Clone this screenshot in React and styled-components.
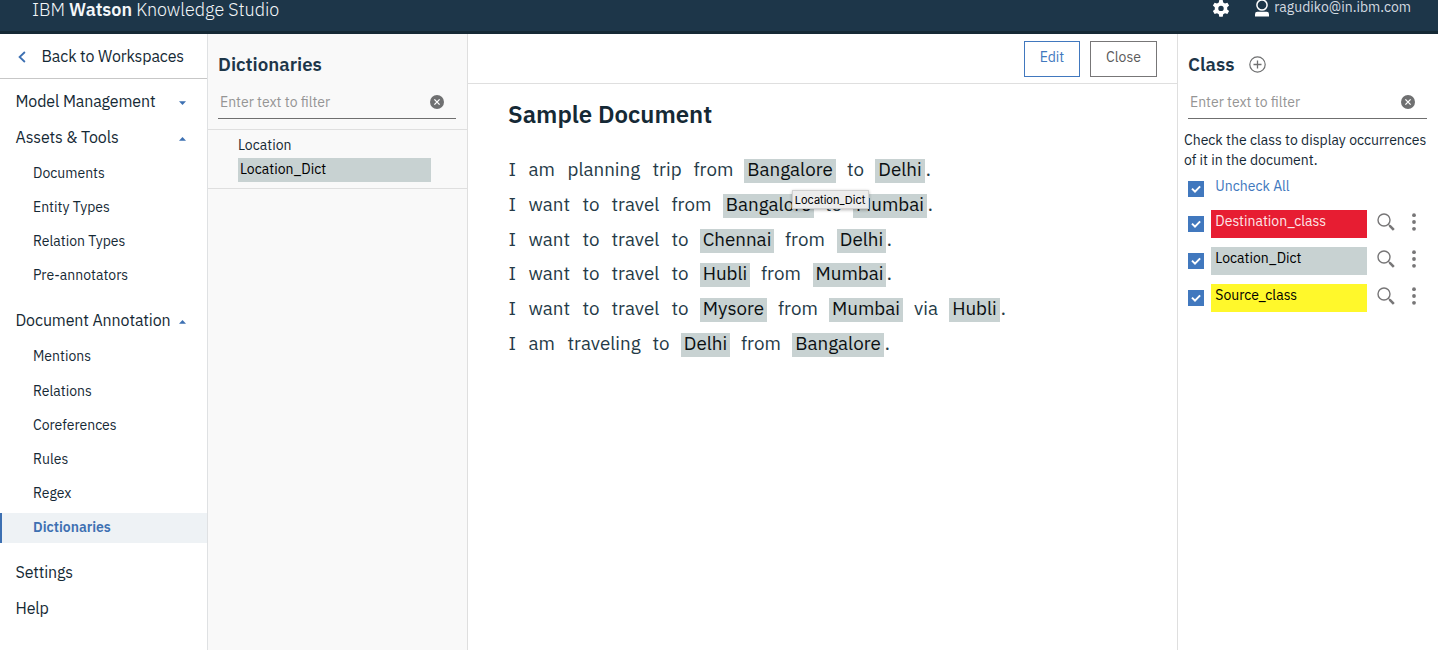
import React from "react";
import styled, { createGlobalStyle, css } from "styled-components";

const GlobalStyle = createGlobalStyle`
  * { box-sizing: border-box; }
  body {
    margin: 0;
    overflow: hidden;
    background: #fff;
    color: #152935;
    font-family: "IBM Plex Sans", Roboto, "Liberation Sans", sans-serif;
    font-size: 14px;
  }
`;

const Page = styled.div`
  display: flex;
  flex-direction: column;
  height: 650px;
`;

const TopBar = styled.header`
  flex: none;
  display: flex;
  align-items: flex-start;
  height: 34px;
  padding: 0 27px 0 32px;
  background: #1d3649;
  border-bottom: 3px solid #152935;
  color: #f4f7f9;
`;

const Brand = styled.div`
  flex: 1;
  font-size: 18px;
  font-weight: 300;
  line-height: 20px;
  letter-spacing: -0.04px;
  strong { font-weight: 600; }
`;

const TopIcon = styled.svg`
  flex: none;
  display: block;
  margin-right: ${(p) => p.$gap}px;
`;

const Email = styled.span`
  font-size: 14px;
  line-height: 15px;
  color: #d3dae0;
`;

const Columns = styled.div`
  flex: 1;
  display: flex;
  min-height: 0;
`;

const Nav = styled.nav`
  flex: none;
  width: 208px;
  border-right: 1px solid #dfe1e3;
`;

const BackLink = styled.div`
  display: flex;
  align-items: center;
  height: 45px;
  padding: 0.4px 0 0 18px;
  margin-bottom: 4px;
  border-bottom: 1px solid #c7c7c7;
  font-size: 16px;
  letter-spacing: -0.13px;
  svg { margin: 2px 15.5px 0 0; }
`;

const NavGroup = styled.div`
  display: flex;
  align-items: center;
  justify-content: space-between;
  height: 36px;
  padding: 0 21.5px 1px 15.5px;
  font-size: 16px;
  letter-spacing: -0.12px;
`;

const Caret = styled.svg`
  display: block;
  width: 7px;
  height: 4px;
  margin-top: 4px;
  fill: #3d70b2;
  transform: ${(p) => (p.$open ? "none" : "scaleY(-1)")};
`;

const NavItems = styled.div`
  display: flex;
  flex-direction: column;
  gap: 4.25px;
  padding: 2.6px 0 ${(p) => p.$after}px;
`;

const NavItem = styled.div`
  height: 30px;
  line-height: 30px;
  padding-left: ${(p) => (p.$active ? 31 : 33)}px;
  font-size: 14px;
  ${(p) =>
    p.$active &&
    css`
      background: #eef2f5;
      border-left: 2px solid #3d70b2;
      color: #3d70b2;
      font-weight: 600;
      line-height: 29px;
    `}
`;

const DictPanel = styled.aside`
  flex: none;
  width: 260px;
  background: #f9f9f9;
  border-right: 1px solid #dfdfdf;
`;

const PanelTitle = styled.h2`
  display: flex;
  align-items: center;
  gap: 15px;
  height: 24px;
  margin: 18px 0 0 10px;
  color: #1d3649;
  font-size: 18.7px;
  font-weight: 600;
`;

const Filter = styled.div`
  display: flex;
  align-items: center;
  justify-content: space-between;
  height: 34px;
  margin: 9px 11px 0 10px;
  padding: 0 12px 0 2px;
  border-bottom: 1px solid #6f6f6f;
  color: #959595;
`;

const DictList = styled.div`
  margin-top: 10px;
  height: 60px;
  padding: 4px 36px 0 30px;
  border-top: 1px solid #dfdfdf;
  border-bottom: 1px solid #dfdfdf;
`;

const DictItem = styled.div`
  height: 24px;
  line-height: 22px;
  ${(p) =>
    p.$selected &&
    css`
      padding-left: 2px;
      background: #c8d2d2;
      color: #000;
      line-height: 23px;
    `}
`;

const Main = styled.main`
  flex: 1;
  min-width: 0;
`;

const Toolbar = styled.div`
  display: flex;
  justify-content: flex-end;
  gap: 10px;
  height: 50px;
  padding: 7px 20px 0 0;
  border-bottom: 1px solid #dfdfdf;
`;

const Button = styled.button`
  height: 36px;
  width: ${(p) => p.$width}px;
  padding: 0 0 4px;
  background: #fff;
  border: 1px solid ${(p) => (p.$primary ? "#4178be" : "#777677")};
  color: ${(p) => (p.$primary ? "#4178be" : "#5a5a5a")};
  font-family: inherit;
  font-size: 14px;
`;

const Document = styled.article`
  padding: 15px 0 0 40px;
`;

const DocTitle = styled.h1`
  margin: 0 0 30px;
  font-size: 24px;
  line-height: 30px;
  font-weight: 600;
`;

const Sentence = styled.div`
  display: flex;
  height: 34.8px;
  padding-left: 0.5px;
  line-height: 21px;
  font-size: 18.8px;
  color: #253a47;
`;

const Word = styled.span`
  flex: none;
  width: ${(p) => p.$width}px;
  white-space: nowrap;
`;

const Period = styled.span`
  padding-left: 0.7px;
`;

const Mention = styled.mark`
  position: relative;
  flex: none;
  width: ${(p) => p.$width}px;
  height: 24px;
  line-height: 21px;
  text-align: center;
  white-space: nowrap;
  background: #c8d2d2;
  color: #0b0f11;
`;

const Tooltip = styled.span`
  position: absolute;
  z-index: 2;
  left: 47.5px;
  top: 31px;
  width: 77px;
  height: 19px;
  line-height: 18px;
  background: #ececec;
  border: 1px solid #d0d0d0;
  box-shadow: 0 1px 3px rgba(0, 0, 0, 0.3);
  color: #000;
  font-family: Inter, sans-serif;
  font-size: 11px;
`;

const ClassPanel = styled.aside`
  flex: none;
  width: 261px;
  border-left: 1px solid #dfdfdf;
`;

const Hint = styled.p`
  margin: 11px 0 0 6px;
  line-height: 20px;
  white-space: nowrap;
`;

const ClassRow = styled.div`
  display: flex;
  align-items: flex-start;
  height: 37px;
  padding-left: 10px;
`;

const CheckAllRow = styled(ClassRow)`
  height: 40px;
  color: #4178be;
  > span { margin-left: 11.3px; line-height: 32px; }
`;

const CheckBox = styled.svg`
  flex: none;
  display: block;
  width: 16px;
  height: 16px;
  margin-top: ${(p) => p.$top}px;
  background: #4178be;
`;

const ClassTag = styled.div`
  width: 156px;
  height: 28px;
  margin-left: 7px;
  padding-left: 4.3px;
  line-height: 23px;
  background: ${(p) => p.$bg};
  color: ${(p) => p.$fg};
`;

const RowIcon = styled.svg`
  flex: none;
  display: block;
  margin: 3px 0 0 ${(p) => p.$left}px;
`;

const Clear = () => (
  <svg width="14" height="14" viewBox="0 0 14 14">
    <circle cx="7" cy="7" r="7" fill="#6f7071" />
    <path d="M4.4 4.4l5.2 5.2M9.6 4.4L4.4 9.6" stroke="#fff" strokeWidth="1.3" />
  </svg>
);

const Check = ({ top }) => (
  <CheckBox $top={top} viewBox="0 0 16 16">
    <path d="M4 7.6L7 10.6L12.1 5.4" fill="none" stroke="#fff" strokeWidth="2" />
  </CheckBox>
);

const Gear = () => (
  <TopIcon $gap={25} width="18" height="18" viewBox="0 0 18 18">
    <path
      fill="#fff"
      fillRule="evenodd"
      d="M7.3 0h3.4l.5 2.5 1.8 1 2.4-.8 1.7 2.9-1.9 1.7v2.1l1.9 1.7-1.7 2.9-2.4-.8-1.8 1-.5 2.5H7.3l-.5-2.5-1.8-1-2.4.8-1.7-2.9 1.9-1.7V7.3L.9 5.6l1.7-2.9 2.4.8 1.8-1zM9 5.7a2.7 2.7 0 100 5.4 2.7 2.7 0 000-5.4z"
    />
  </TopIcon>
);

const User = () => (
  <TopIcon $gap={5} width="14" height="17" viewBox="0 0 14 17">
    <circle cx="7" cy="5" r="5.1" fill="none" stroke="#fff" strokeWidth="1.5" />
    <path d="M0 16.5v-2.3q0-2.4 2.4-2.4h9.2q2.4 0 2.4 2.4v2.3z" fill="#fff" />
  </TopIcon>
);

const groups = [
  { label: "Model Management" },
  {
    label: "Assets & Tools",
    after: 12.4,
    items: ["Documents", "Entity Types", "Relation Types", "Pre-annotators"],
  },
  {
    label: "Document Annotation",
    after: 11.9,
    items: ["Mentions", "Relations", "Coreferences", "Rules", "Regex", "Dictionaries"],
  },
];

// Each token is [text, width, mention?, tooltip?].
const sentences = [
  [["I", 20], ["am", 39], ["planning", 85], ["trip", 41], ["from", 50.5], ["Bangalore", 92, true, "Location_Dict"], ["", 11], ["to", 28], ["Delhi", 50, true]],
  [["I", 20], ["want", 54], ["to", 29], ["travel", 60], ["from", 51.5], ["Bangalore", 91, true], ["", 11], ["to", 28], ["Mumbai", 74, true]],
  [["I", 20], ["want", 54], ["to", 29], ["travel", 60], ["to", 28.5], ["Chennai", 74, true], ["", 11], ["from", 52], ["Delhi", 49, true]],
  [["I", 20], ["want", 54], ["to", 29], ["travel", 60], ["to", 28.5], ["Hubli", 50, true], ["", 11], ["from", 52], ["Mumbai", 73, true]],
  [["I", 20], ["want", 54], ["to", 29], ["travel", 60], ["to", 28.5], ["Mysore", 67, true], ["", 11], ["from", 51], ["Mumbai", 74, true], ["", 11], ["via", 35], ["Hubli", 51, true]],
  [["I", 20], ["am", 39], ["traveling", 85], ["to", 28.5], ["Delhi", 49, true], ["", 11], ["from", 51], ["Bangalore", 92, true]],
];

const classes = [
  { name: "Destination_class", bg: "#e71d32", fg: "#fde6e8" },
  { name: "Location_Dict", bg: "#c8d2d2", fg: "#000" },
  { name: "Source_class", bg: "#fff82b", fg: "#000" },
];

export default function App() {
  return (
    <Page>
      <GlobalStyle />
      <TopBar>
        <Brand>IBM <strong>Watson</strong> Knowledge Studio</Brand>
        <Gear />
        <User />
        <Email>ragudiko@in.ibm.com</Email>
      </TopBar>
      <Columns>
        <Nav>
          <BackLink>
            <svg width="8" height="12" viewBox="0 0 8 12">
              <path d="M6.9 1L1.6 6l5.3 5" fill="none" stroke="#3d70b2" strokeWidth="1.8" />
            </svg>
            Back to Workspaces
          </BackLink>
          {groups.map((g) => (
            <React.Fragment key={g.label}>
              <NavGroup>
                {g.label}
                <Caret $open={!!g.items} viewBox="0 0 7 4">
                  <path d="M3.5 0L7 3.8H0z" />
                </Caret>
              </NavGroup>
              {g.items && (
                <NavItems $after={g.after}>
                  {g.items.map((item) => (
                    <NavItem key={item} $active={item === "Dictionaries"}>{item}</NavItem>
                  ))}
                </NavItems>
              )}
            </React.Fragment>
          ))}
          <NavGroup>Settings</NavGroup>
          <NavGroup>Help</NavGroup>
        </Nav>
        <DictPanel>
          <PanelTitle>Dictionaries</PanelTitle>
          <Filter>Enter text to filter<Clear /></Filter>
          <DictList>
            <DictItem>Location</DictItem>
            <DictItem $selected>Location_Dict</DictItem>
          </DictList>
        </DictPanel>
        <Main>
          <Toolbar>
            <Button $primary $width={56}>Edit</Button>
            <Button $width={67}>Close</Button>
          </Toolbar>
          <Document>
            <DocTitle>Sample Document</DocTitle>
            {sentences.map((tokens, i) => (
              <Sentence key={i}>
                {tokens.map(([text, width, mention, tip], j) =>
                  mention ? (
                    <Mention key={j} $width={width}>
                      {text}
                      {tip && <Tooltip>{tip}</Tooltip>}
                    </Mention>
                  ) : (
                    <Word key={j} $width={width}>{text}</Word>
                  )
                )}
                <Period>.</Period>
              </Sentence>
            ))}
          </Document>
        </Main>
        <ClassPanel>
          <PanelTitle>
            Class
            <svg width="17" height="17" viewBox="0 0 17 17" fill="none" stroke="#6f7071">
              <circle cx="8.5" cy="8.5" r="7.7" strokeWidth="1.2" />
              <path d="M8.5 4.5v8M4.5 8.5h8" strokeWidth="1.3" />
            </svg>
          </PanelTitle>
          <Filter>Enter text to filter<Clear /></Filter>
          <Hint>Check the class to display occurrences<br />of it in the document.</Hint>
          <CheckAllRow>
            <Check top={11} />
            <span>Uncheck All</span>
          </CheckAllRow>
          {classes.map((c) => (
            <ClassRow key={c.name}>
              <Check top={6} />
              <ClassTag $bg={c.bg} $fg={c.fg}>{c.name}</ClassTag>
              <RowIcon $left={10} width="18" height="18" viewBox="0 0 18 18" fill="none" stroke="#777677">
                <circle cx="7" cy="7" r="6" strokeWidth="1.4" />
                <path d="M11.2 11.2L13 13" strokeWidth="1.2" />
                <path d="M12.6 12.6L16.8 16.8" strokeWidth="2.6" />
              </RowIcon>
              <RowIcon $left={17} width="4" height="18" viewBox="0 0 4 18" fill="#777677">
                <circle cx="2" cy="2.2" r="1.9" />
                <circle cx="2" cy="9" r="1.9" />
                <circle cx="2" cy="15.8" r="1.9" />
              </RowIcon>
            </ClassRow>
          ))}
        </ClassPanel>
      </Columns>
    </Page>
  );
}
